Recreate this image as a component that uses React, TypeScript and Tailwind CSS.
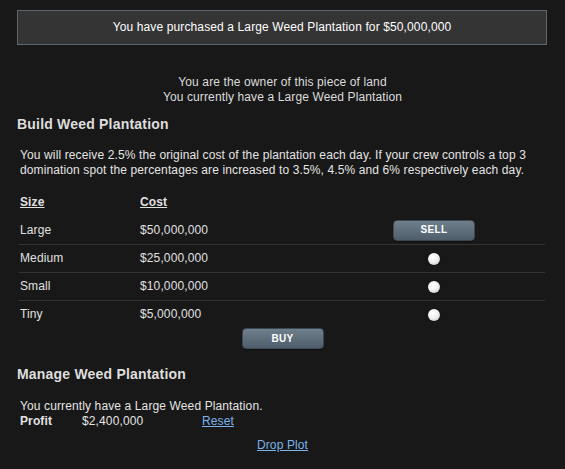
import React from "react";

function Btn({ label }: { label: string }) {
  return (
    <button className="w-[82px] h-[21px] rounded-[4px] border border-[#3c4852] bg-gradient-to-b from-[#6f808c] to-[#4e5d69] text-white text-[10px] font-bold leading-none tracking-[0.3px] shadow-[0_1px_0_rgba(0,0,0,0.4)]">
      {label}
    </button>
  );
}

function Radio() {
  return (
    <span className="block w-[12px] h-[12px] rounded-full bg-[radial-gradient(circle_at_40%_35%,#ffffff_0%,#f2f2f2_45%,#b8b8b8_100%)] shadow-[0_0_1px_rgba(0,0,0,0.6)]" />
  );
}

const rows = [
  { size: "Large", cost: "$50,000,000", sell: true },
  { size: "Medium", cost: "$25,000,000" },
  { size: "Small", cost: "$10,000,000" },
  { size: "Tiny", cost: "$5,000,000" },
];

export default function App() {
  return (
    <div
      className="w-[565px] h-[469px] bg-[#181818] text-[#e0e0e0] text-[12px] leading-[15px] tracking-[0.12px] overflow-hidden"
      style={{ fontFamily: '"Liberation Sans", Arial, sans-serif' }}
    >
      <div className="pt-[10px] px-[17px] pr-[18px]">
        <div className="h-[35px] border border-[#5b6671] bg-[#343434] flex items-center justify-center text-white text-[12px]">
          You have purchased a Large Weed Plantation for $50,000,000
        </div>
      </div>

      <div className="mt-[30px] text-center text-[#dcdcdc]">
        <div>You are the owner of this piece of land</div>
        <div>You currently have a Large Weed Plantation</div>
      </div>

      <div className="mt-[11px] pl-[17px] text-[14px] leading-[17px] font-bold text-[#dedede] tracking-[0.2px]">
        Build Weed Plantation
      </div>

      <div className="mt-[15px] pl-[20px] text-[#e4e4e4]">
        <div>You will receive 2.5% the original cost of the plantation each day. If your crew controls a top 3</div>
        <div>domination spot the percentages are increased to 3.5%, 4.5% and 6% respectively each day.</div>
      </div>

      <div className="mt-[10px] ml-[19px] w-[526px]">
        <div className="grid grid-cols-[120px_184px_1fr] h-[28px] items-center font-bold">
          <span className="pl-[1px] underline">Size</span>
          <span className="pl-[1px] underline">Cost</span>
          <span />
        </div>
        {rows.map((r, i) => (
          <div
            key={r.size}
            className={
              "grid grid-cols-[120px_184px_1fr] h-[28px] items-center " +
              (i > 0 ? "border-t border-[#333333]" : "")
            }
          >
            <span className="pl-[1px]">{r.size}</span>
            <span className="pl-[1px]">{r.cost}</span>
            <span className="flex justify-center">
              {r.sell ? <Btn label="SELL" /> : <Radio />}
            </span>
          </div>
        ))}
      </div>

      <div className="flex justify-center">
        <Btn label="BUY" />
      </div>

      <div className="mt-[17px] pl-[17px] text-[14px] leading-[17px] font-bold text-[#dedede] tracking-[0.2px]">
        Manage Weed Plantation
      </div>

      <div className="mt-[16px] pl-[20px] text-[#e4e4e4]">
        <div>You currently have a Large Weed Plantation.</div>
        <div className="flex">
          <span className="w-[62px] font-bold">Profit</span>
          <span className="w-[120px]">$2,400,000</span>
          <a href="#" className="text-[#7cb3ea] underline">Reset</a>
        </div>
      </div>

      <div className="mt-[9px] text-center">
        <a href="#" className="text-[#7cb3ea] underline">Drop Plot</a>
      </div>
    </div>
  );
}
